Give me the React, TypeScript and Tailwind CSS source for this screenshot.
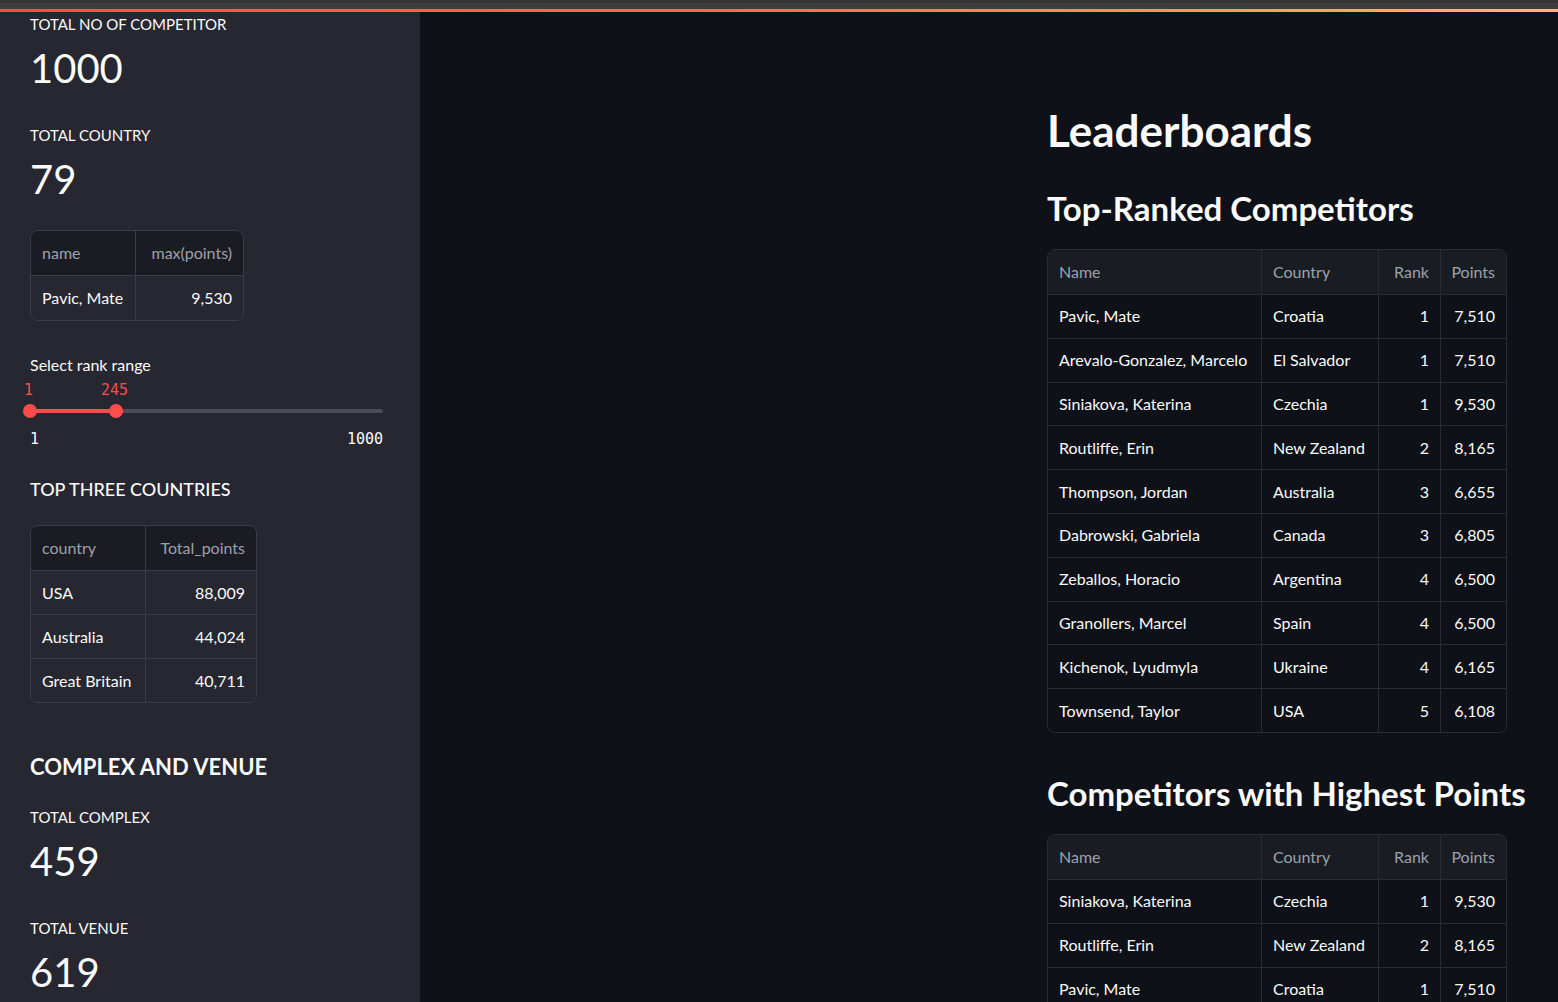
import React from "react";

type Col = { label: string; w: number; right?: boolean };

const sans = "font-['Lato','Noto_Sans',sans-serif]";

function DataTable({
  cols,
  rows,
  headBg,
  bodyBg,
  line,
  rowH,
}: {
  cols: Col[];
  rows: (string | number)[][];
  headBg: string;
  bodyBg: string;
  line: string;
  rowH: string;
}) {
  return (
    <div className={`w-fit rounded-lg border ${line} overflow-hidden`}>
      <div className={`flex ${headBg}`}>
        {cols.map((c, i) => (
          <div
            key={c.label}
            style={{ width: c.w }}
            className={`h-[44px] flex items-center px-[11px] text-[16px] text-[#9da1ab] ${
              i > 0 ? `border-l ${line}` : ""
            } ${c.right ? "justify-end" : ""}`}
          >
            {c.label}
          </div>
        ))}
      </div>
      {rows.map((r, ri) => (
        <div key={ri} className={`flex border-t ${line} ${bodyBg}`}>
          {r.map((v, i) => (
            <div
              key={i}
              style={{ width: cols[i].w }}
              className={`${rowH} flex items-center px-[11px] text-[16px] text-[#fafafa] whitespace-nowrap ${
                i > 0 ? `border-l ${line}` : ""
              } ${cols[i].right ? "justify-end" : ""}`}
            >
              {v}
            </div>
          ))}
        </div>
      ))}
    </div>
  );
}

function Metric({ label, value, labelTop }: { label: string; value: string; labelTop: string }) {
  return (
    <>
      <div className={`${labelTop} text-[15px] leading-[20px] text-[#fafafa]`}>{label}</div>
      <div className="mt-[8px] text-[40px] leading-[52px] text-[#fafafa]">{value}</div>
    </>
  );
}

const leaders = [
  ["Pavic, Mate", "Croatia", 1, "7,510"],
  ["Arevalo-Gonzalez, Marcelo", "El Salvador", 1, "7,510"],
  ["Siniakova, Katerina", "Czechia", 1, "9,530"],
  ["Routliffe, Erin", "New Zealand", 2, "8,165"],
  ["Thompson, Jordan", "Australia", 3, "6,655"],
  ["Dabrowski, Gabriela", "Canada", 3, "6,805"],
  ["Zeballos, Horacio", "Argentina", 4, "6,500"],
  ["Granollers, Marcel", "Spain", 4, "6,500"],
  ["Kichenok, Lyudmyla", "Ukraine", 4, "6,165"],
  ["Townsend, Taylor", "USA", 5, "6,108"],
];

const highest = [
  ["Siniakova, Katerina", "Czechia", 1, "9,530"],
  ["Routliffe, Erin", "New Zealand", 2, "8,165"],
  ["Pavic, Mate", "Croatia", 1, "7,510"],
];

const mainCols: Col[] = [
  { label: "Name", w: 213 },
  { label: "Country", w: 117 },
  { label: "Rank", w: 62, right: true },
  { label: "Points", w: 66, right: true },
];

export default function App() {
  return (
    <div className={`w-[1558px] h-[1002px] overflow-hidden bg-[#0e1117] ${sans} flex flex-col`}>
      {/* browser strip + streamlit decoration */}
      <div className="h-[9px] bg-[#3d3d3d] border-t-[3px] border-[#333333]" />
      <div className="h-[3px] bg-gradient-to-r from-[#ff4b4b] via-[#ff6b55] to-[#ffb86a]" />

      <div className="flex flex-1 min-h-0">
        {/* Sidebar */}
        <aside className="w-[420px] shrink-0 bg-[#262730] pl-[30px] flex flex-col">
          <Metric label="TOTAL NO OF COMPETITOR" value="1000" labelTop="mt-[2px]" />
          <Metric label="TOTAL COUNTRY" value="79" labelTop="mt-[31px]" />

          <div className="mt-[25px]">
            <DataTable
              cols={[
                { label: "name", w: 104 },
                { label: "max(points)", w: 108, right: true },
              ]}
              rows={[["Pavic, Mate", "9,530"]]}
              headBg="bg-[#1b1c23]"
              bodyBg="bg-[#262730]"
              line="border-[#3b3c45]"
              rowH="h-[44px]"
            />
          </div>

          <div className="mt-[34px] text-[16px] leading-[20px] text-[#fafafa]">Select rank range</div>
          <div className="relative w-[353px] h-[70px] mt-[5px] font-['DejaVu_Sans_Mono',monospace] text-[15px] leading-[20px]">
            <span className="absolute left-[-6px] top-0 text-[#ff4b4b]">1</span>
            <span className="absolute left-[71px] top-0 text-[#ff4b4b]">245</span>
            <div className="absolute left-0 right-0 top-[29px] h-[4px] rounded-full bg-[#4b4c57]" />
            <div className="absolute left-0 w-[86px] top-[29px] h-[4px] bg-[#ff4b4b]" />
            <div className="absolute left-[-7px] top-[24px] w-[14px] h-[14px] rounded-full bg-[#ff4b4b]" />
            <div className="absolute left-[79px] top-[24px] w-[14px] h-[14px] rounded-full bg-[#ff4b4b]" />
            <span className="absolute left-0 top-[49px] text-[#fafafa]">1</span>
            <span className="absolute right-0 top-[49px] text-[#fafafa]">1000</span>
          </div>

          <div className="mt-[26px] text-[18px] leading-[26px] font-medium text-[#fafafa]">TOP THREE COUNTRIES</div>
          <div className="mt-[23px]">
            <DataTable
              cols={[
                { label: "country", w: 114 },
                { label: "Total_points", w: 111, right: true },
              ]}
              rows={[
                ["USA", "88,009"],
                ["Australia", "44,024"],
                ["Great Britain", "40,711"],
              ]}
              headBg="bg-[#1b1c23]"
              bodyBg="bg-[#262730]"
              line="border-[#3b3c45]"
              rowH="h-[43px]"
            />
          </div>

          <div className="mt-[49px] text-[22px] leading-[30px] font-bold text-[#fafafa]">COMPLEX AND VENUE</div>
          <Metric label="TOTAL COMPLEX" value="459" labelTop="mt-[25px]" />
          <Metric label="TOTAL VENUE" value="619" labelTop="mt-[31px]" />
        </aside>

        {/* Main */}
        <main className="flex-1 pl-[627px] flex flex-col text-[#fafafa]">
          <h1 className="mt-[92px] text-[44px] leading-[52px] font-bold">Leaderboards</h1>
          <h2 className="mt-[31px] text-[33px] leading-[42px] font-bold">Top-Ranked Competitors</h2>
          <div className="mt-[20px]">
            <DataTable
              cols={mainCols}
              rows={leaders}
              headBg="bg-[#1a1c24]"
              bodyBg="bg-[#0e1117]"
              line="border-[#2a2c33]"
              rowH="h-[42.8px]"
            />
          </div>
          <h2 className="mt-[39px] text-[33px] leading-[42px] font-bold whitespace-nowrap">
            Competitors with Highest Points
          </h2>
          <div className="mt-[20px]">
            <DataTable
              cols={mainCols}
              rows={highest}
              headBg="bg-[#1a1c24]"
              bodyBg="bg-[#0e1117]"
              line="border-[#2a2c33]"
              rowH="h-[42.8px]"
            />
          </div>
        </main>
      </div>
    </div>
  );
}
